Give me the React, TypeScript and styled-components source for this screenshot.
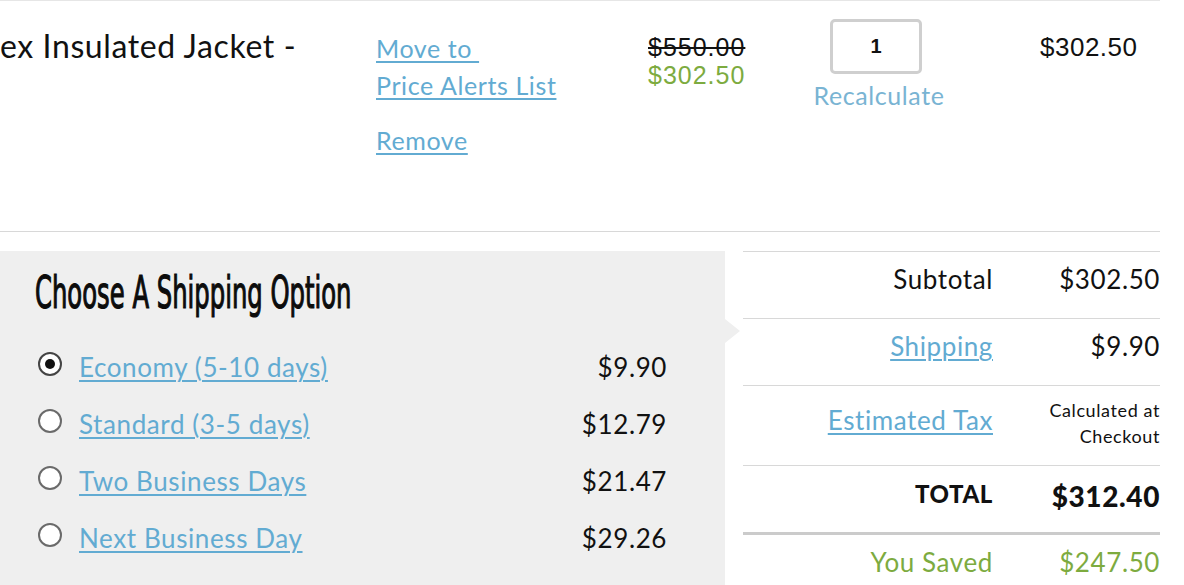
import styled, { createGlobalStyle } from 'styled-components'

const GlobalStyle = createGlobalStyle`
  html, body {
    margin: 0;
    padding: 0;
    background: #fff;
    overflow: hidden;
  }
  body {
    font-family: Lato, "Noto Sans", sans-serif;
    letter-spacing: 0.6px;
    color: #111;
  }
`

const LINK = '#62abd2'
const GREEN = '#7dab3f'
const RULE = '#d8d8d8'
const PANEL = '#efefef'

const Page = styled.div`
  width: 1160px;
  height: 585px;
`

/* cart line */

const ItemRow = styled.div`
  display: grid;
  grid-template-columns: 376px 272px 164px 134px 214px;
  box-sizing: border-box;
  height: 232px;
  border-top: 1px solid #e6e6e6;
  border-bottom: 1px solid ${RULE};
`

const ItemName = styled.div`
  padding-top: 26px;
  font-size: 32px;
  line-height: 38px;
  font-weight: 400;
  white-space: nowrap;
  overflow: hidden;
`

const Actions = styled.div`
  padding-top: 29px;
  display: flex;
  flex-direction: column;
  align-items: flex-start;
`

const Link = styled.a<{ $gap?: number }>`
  color: ${LINK};
  font-size: 25px;
  line-height: 37px;
  text-decoration: underline;
  text-decoration-thickness: 2px;
  text-underline-offset: 3px;
  margin-top: ${({ $gap }) => $gap ?? 0}px;
  cursor: pointer;
`

const PriceCell = styled.div`
  padding-top: 32px;
  font-family: "Liberation Sans", Arial, sans-serif;
  font-size: 25px;
  line-height: 28px;
  letter-spacing: 1px;
`

const Price = styled.div<{ $old?: boolean }>`
  color: ${({ $old }) => ($old ? '#111' : GREEN)};
  text-decoration: ${({ $old }) => ($old ? 'line-through' : 'none')};
  text-decoration-thickness: 2px;
`

const QtyCell = styled.div`
  display: flex;
  flex-direction: column;
  align-items: center;
  padding-top: 18px;
`

const QtyBox = styled.div`
  box-sizing: border-box;
  width: 92px;
  height: 55px;
  margin-right: 6px;
  border: 3px solid #cfcfcf;
  border-radius: 5px;
  display: flex;
  align-items: center;
  justify-content: center;
  font-family: "Liberation Sans", Arial, sans-serif;
  font-weight: 700;
  font-size: 20px;
  letter-spacing: 0;
  color: #111;
`

const Recalc = styled.div`
  margin-top: 6px;
  color: #79b4d3;
  font-size: 25px;
  line-height: 30px;
`

const LineTotal = styled.div`
  padding: 33px 0 0 94px;
  font-family: "Liberation Sans", Arial, sans-serif;
  font-size: 26px;
  line-height: 27px;
  letter-spacing: 0.5px;
`

/* lower area */

const Lower = styled.div`
  display: flex;
  align-items: flex-start;
  margin-top: 19px;
`

const ShippingPanel = styled.section`
  position: relative;
  box-sizing: border-box;
  width: 725px;
  height: 334px;
  padding: 19px 58px 0 38px;
  background: ${PANEL};

  &::after {
    content: '';
    position: absolute;
    right: -15px;
    top: 68px;
    border-left: 15px solid ${PANEL};
    border-top: 12px solid transparent;
    border-bottom: 12px solid transparent;
  }
`

const Heading = styled.h2`
  margin: 0 0 36px -3px;
  font-family: "Liberation Sans Narrow", "DejaVu Sans Condensed", "Liberation Sans", sans-serif;
  font-weight: 400;
  font-size: 45px;
  line-height: 45px;
  letter-spacing: 0;
  color: #0c0c0c;
  white-space: nowrap;
  -webkit-text-stroke: 1.2px #0c0c0c;
  transform: scaleX(0.6);
  transform-origin: left center;
`

const Options = styled.div`
  display: flex;
  flex-direction: column;
  gap: 25px;
`

const Option = styled.label`
  display: flex;
  align-items: flex-start;
  font-size: 26px;
  line-height: 32px;
`

const Radio = styled.span<{ $checked?: boolean }>`
  box-sizing: border-box;
  flex: none;
  width: 24px;
  height: 24px;
  margin: 1px 17px 0 0;
  border-radius: 50%;
  border: 2px solid ${({ $checked }) => ($checked ? '#444' : '#6a6a6a')};
  background: #fff;
  display: flex;
  align-items: center;
  justify-content: center;

  &::before {
    content: '';
    width: 10px;
    height: 10px;
    border-radius: 50%;
    background: #111;
    display: ${({ $checked }) => ($checked ? 'block' : 'none')};
  }
`

const OptionLabel = styled.span`
  color: ${LINK};
  text-decoration: underline;
  text-decoration-thickness: 2px;
  text-underline-offset: 3px;
  flex: 1;
`

const OptionPrice = styled.span`
  color: #111;
`

const Summary = styled.div`
  margin-left: 18px;
  width: 417px;
`

const SummaryRow = styled.div<{ $height?: number; $pad?: number; $thick?: boolean }>`
  display: grid;
  grid-template-columns: 250px 167px;
  box-sizing: border-box;
  height: ${({ $height }) => ($height ? `${$height}px` : 'auto')};
  padding-top: ${({ $pad }) => $pad ?? 11}px;
  border-top: ${({ $thick }) => ($thick ? `3px solid #cbcbcb` : `1px solid ${RULE}`)};
  text-align: right;
`

const Label = styled.div<{ $tone?: 'link' | 'green' | 'bold'; $offset?: number }>`
  font-size: ${({ $tone }) => ($tone === 'bold' ? 24 : 26)}px;
  line-height: ${({ $tone }) => ($tone === 'bold' ? 30 : 32)}px;
  font-weight: ${({ $tone }) => ($tone === 'bold' ? 900 : 400)};
  color: ${({ $tone }) => ($tone === 'link' ? LINK : $tone === 'green' ? GREEN : '#111')};
  margin-top: ${({ $offset }) => $offset ?? 0}px;

  a {
    color: inherit;
    text-decoration: underline;
    text-decoration-thickness: 2px;
    text-underline-offset: 3px;
  }
`

const Value = styled.div<{ $tone?: 'green' | 'bold' | 'small' }>`
  font-size: ${({ $tone }) => ($tone === 'bold' ? 28 : $tone === 'small' ? 18 : 26)}px;
  line-height: ${({ $tone }) => ($tone === 'bold' ? 34 : $tone === 'small' ? 26 : 32)}px;
  font-weight: ${({ $tone }) => ($tone === 'bold' ? 900 : 400)};
  color: ${({ $tone }) => ($tone === 'green' ? GREEN : '#111')};
`

const shippingOptions = [
  { label: 'Economy (5-10 days)', price: '$9.90', checked: true },
  { label: 'Standard (3-5 days)', price: '$12.79' },
  { label: 'Two Business Days', price: '$21.47' },
  { label: 'Next Business Day', price: '$29.26' },
]

export default function App() {
  return (
    <Page>
      <GlobalStyle />
      <ItemRow>
        <ItemName>ex Insulated Jacket -</ItemName>
        <Actions>
          <Link>
            Move to&nbsp;
            <br />
            Price Alerts List
          </Link>
          <Link $gap={18}>Remove</Link>
        </Actions>
        <PriceCell>
          <Price $old>$550.00</Price>
          <Price>$302.50</Price>
        </PriceCell>
        <QtyCell>
          <QtyBox>1</QtyBox>
          <Recalc>Recalculate</Recalc>
        </QtyCell>
        <LineTotal>$302.50</LineTotal>
      </ItemRow>

      <Lower>
        <ShippingPanel>
          <Heading>Choose A Shipping Option</Heading>
          <Options>
            {shippingOptions.map((o) => (
              <Option key={o.label}>
                <Radio $checked={o.checked} />
                <OptionLabel>{o.label}</OptionLabel>
                <OptionPrice>{o.price}</OptionPrice>
              </Option>
            ))}
          </Options>
        </ShippingPanel>

        <Summary>
          <SummaryRow $height={67}>
            <Label>Subtotal</Label>
            <Value>$302.50</Value>
          </SummaryRow>
          <SummaryRow $height={67}>
            <Label $tone="link">
              <a>Shipping</a>
            </Label>
            <Value>$9.90</Value>
          </SummaryRow>
          <SummaryRow $height={80}>
            <Label $tone="link" $offset={7}>
              <a>Estimated Tax</a>
            </Label>
            <Value $tone="small">
              Calculated at
              <br />
              Checkout
            </Value>
          </SummaryRow>
          <SummaryRow $height={67} $pad={13}>
            <Label $tone="bold">TOTAL</Label>
            <Value $tone="bold">$312.40</Value>
          </SummaryRow>
          <SummaryRow $thick>
            <Label $tone="green">You Saved</Label>
            <Value $tone="green">$247.50</Value>
          </SummaryRow>
        </Summary>
      </Lower>
    </Page>
  )
}
